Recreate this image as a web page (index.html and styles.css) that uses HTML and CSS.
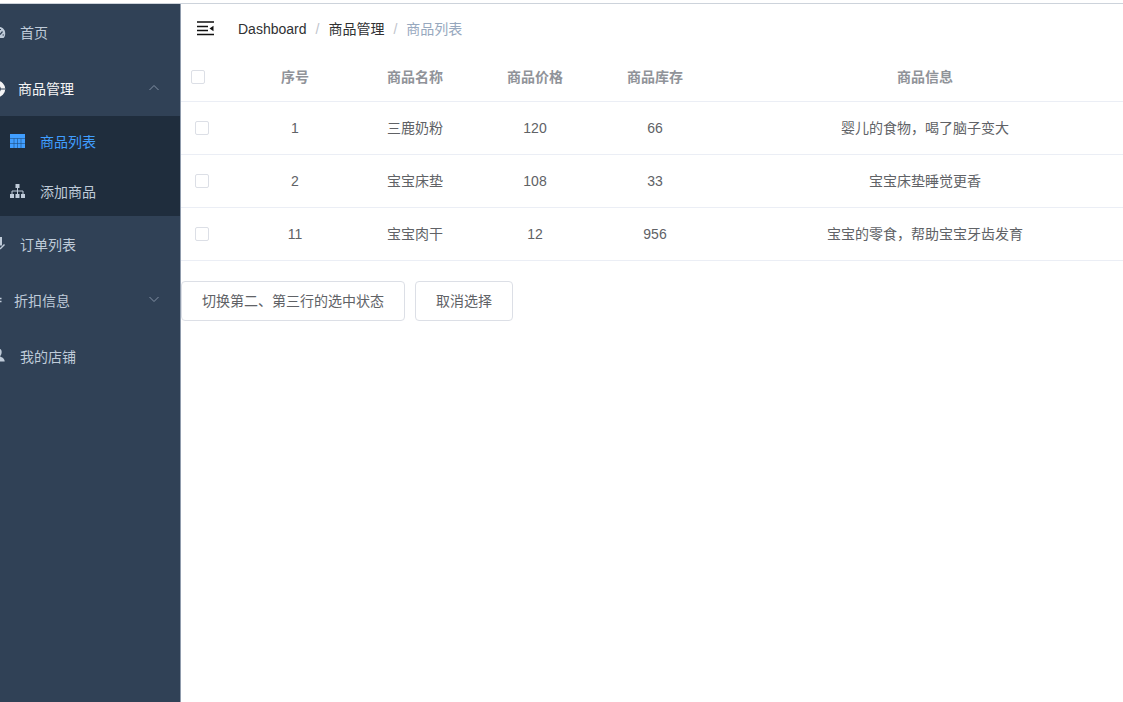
FILE: index.html
```html
<!DOCTYPE html>
<html lang="zh-CN">
<head>
<meta charset="utf-8">
<meta name="viewport" content="width=device-width, initial-scale=1">
<title>商品列表</title>
<link rel="stylesheet" href="styles.css">
</head>
<body>
<div class="app">
  <nav class="sidebar">
    <a class="item" href="#">
      <svg class="icon" viewBox="0 0 20 16"><path d="M0 2c3 .5 5.200 3 5.200 6.500 0 2-.7 3.500-1.700 4.500H0z" fill="currentColor"/><path d="M0 9.500L2.500 6.500M2.500 10h1.500M0 4.500h1" stroke="#304156" stroke-width="1.200" fill="none"/></svg>
      <span>首页</span>
    </a>
    <button class="item open" type="button" aria-expanded="true">
      <svg class="icon icon-mid" viewBox="0 0 18 16"><circle cx="-3" cy="8" r="6" fill="none" stroke="currentColor" stroke-width="4.500"/><path d="M0 8h5" stroke="#304156" stroke-width="1"/></svg>
      <span>商品管理</span>
      <svg class="arrow" viewBox="0 0 12 12"><path d="M1.500 7L6 2.500 10.500 7"/></svg>
    </button>
    <div class="submenu">
      <a class="item active" href="#" aria-current="page">
        <svg class="icon-sub" viewBox="0 0 16 16"><path d="M0 0h15v14H0z" fill="currentColor"/><path d="M0 4.500h15M0 9.500h15M4 4.500V14M7.500 4.500V14M11 4.500V14" stroke="#1f4d80" stroke-width=".6" fill="none"/></svg>
        <span>商品列表</span>
      </a>
      <a class="item" href="#">
        <svg class="icon-sub" viewBox="0 0 16 16"><path d="M5.500 0h4v4h-4zM0 10h4v4H0zM5.500 10h4v4h-4zM11 10h4v4h-4z" fill="currentColor"/><path d="M7.500 4v6M2 10V7h11v3" stroke="currentColor" fill="none"/></svg>
        <span>添加商品</span>
      </a>
    </div>
    <a class="item" href="#">
      <svg class="icon" viewBox="0 0 20 16"><path d="M0 0h2v8.500H0z" fill="currentColor"/><path d="M4.500 7.500L0 12" stroke="currentColor" stroke-width="1.500" fill="none"/></svg>
      <span>订单列表</span>
    </a>
    <button class="item" type="button" aria-expanded="false">
      <svg class="icon icon-narrow" viewBox="0 0 14 16"><path d="M0 5.500h1.500M0 8.500h1.500" stroke="currentColor" stroke-width="1.500"/></svg>
      <span>折扣信息</span>
      <svg class="arrow" viewBox="0 0 12 12"><path d="M1.500 2L6 6.500 10.500 2"/></svg>
    </button>
    <a class="item" href="#">
      <svg class="icon" viewBox="0 0 20 16"><path d="M0 0c2 .5 2.500 4.500 0 7.500 2 1 4.500 1.500 4.700 5H0z" fill="currentColor"/></svg>
      <span>我的店铺</span>
    </a>
  </nav>
  <main class="main">
    <header class="navbar">
      <button class="toggle" type="button" aria-label="收起菜单">
        <svg viewBox="0 0 18 16"><path d="M0 1h17M0 5.500h11M0 9.500h11M0 13.500h17" stroke="#111" stroke-width="1.600" fill="none"/><path d="M12.500 7.500L16.500 4.700v5.600z" fill="#111"/></svg>
      </button>
      <div class="crumbs">
        <a href="#">Dashboard</a><span class="sep">/</span><a href="#">商品管理</a><span class="sep">/</span><span class="current">商品列表</span>
      </div>
    </header>
    <table class="goods">
      <colgroup><col class="col-check"><col class="col"><col class="col"><col class="col"><col class="col"><col></colgroup>
      <thead>
        <tr><th><input type="checkbox" aria-label="全选"></th><th>序号</th><th>商品名称</th><th>商品价格</th><th>商品库存</th><th>商品信息</th></tr>
      </thead>
      <tbody>
        <tr><td><input type="checkbox" aria-label="选择 1"></td><td>1</td><td>三鹿奶粉</td><td>120</td><td>66</td><td>婴儿的食物，喝了脑子变大</td></tr>
        <tr><td><input type="checkbox" aria-label="选择 2"></td><td>2</td><td>宝宝床垫</td><td>108</td><td>33</td><td>宝宝床垫睡觉更香</td></tr>
        <tr><td><input type="checkbox" aria-label="选择 11"></td><td>11</td><td>宝宝肉干</td><td>12</td><td>956</td><td>宝宝的零食，帮助宝宝牙齿发育</td></tr>
      </tbody>
    </table>
    <div class="actions">
      <button class="btn" type="button">切换第二、第三行的选中状态</button>
      <button class="btn" type="button">取消选择</button>
    </div>
  </main>
</div>
</body>
</html>
```
FILE: styles.css
```css
* { box-sizing: border-box; }

body {
  margin: 0;
  padding-top: 3px;
  background: #fff;
  color: #606266;
  font: 14px/20px "Liberation Sans", "Noto Sans CJK SC", sans-serif;
}

button { font: inherit; }
a { color: inherit; text-decoration: none; }

.app {
  display: flex;
  min-height: calc(100vh - 3px);
  border-top: 1px solid #cdd3db;
}

/* Sidebar */
.sidebar {
  flex: none;
  width: 181px;
  border-right: 1px solid #8f9bac;
  background: #304156;
  color: #bfcbd9;
}

.item {
  display: flex;
  align-items: center;
  width: 100%;
  height: 56px;
  padding: 2px 20px 0 0;
  border: 0;
  background: none;
  color: inherit;
  text-align: left;
}

.open { color: #f4f4f5; }
.icon { flex: none; width: 20px; height: 16px; }
.icon-mid { width: 18px; }
.icon-narrow { width: 14px; }

.arrow {
  width: 12px;
  height: 12px;
  margin-left: auto;
  fill: none;
  stroke: #8391a5;
}

.submenu { background: #1f2d3d; }
.submenu .item { gap: 14px; height: 50px; padding-left: 10px; }
.submenu .active { color: #409eff; }
.icon-sub { flex: none; width: 16px; height: 16px; }

/* Content */
.main { flex: 1; min-width: 0; }

.navbar {
  display: flex;
  align-items: center;
  height: 50px;
  padding-left: 16px;
}

.toggle {
  display: flex;
  padding: 0;
  border: 0;
  background: none;
}

.toggle svg { width: 18px; height: 16px; }

.crumbs {
  display: flex;
  margin-left: 23px;
  color: #303133;
}

.sep { margin: 0 9px; color: #c0c4cc; }
.current { color: #97a8be; }

.goods {
  width: 100%;
  border-collapse: collapse;
  table-layout: fixed;
}

.col-check { width: 54px; }
.col { width: 120px; }

th, td {
  height: 53px;
  padding: 0;
  border-bottom: 1px solid #ebeef5;
  text-align: center;
}

th { height: 47px; color: #909399; }
th:first-child { padding-left: 10px; text-align: left; }
td:first-child { padding-left: 14px; text-align: left; }
th:last-child, td:last-child { padding-left: 12px; }

input[type="checkbox"] {
  display: block;
  appearance: none;
  width: 14px;
  height: 14px;
  margin: 0;
  border: 1px solid #dcdfe6;
  border-radius: 2px;
  background: #fff;
}

input[type="checkbox"]:checked { border-color: #409eff; background: #409eff; }

.actions { display: flex; gap: 10px; margin-top: 20px; }

.btn {
  padding: 9px 20px;
  border: 1px solid #dcdfe6;
  border-radius: 4px;
  background: #fff;
  color: #606266;
}
```
